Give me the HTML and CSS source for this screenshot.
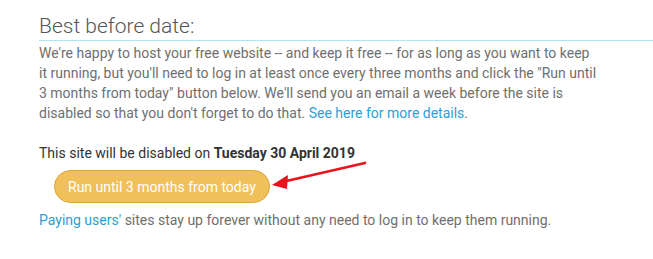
FILE: index.html
```html
<!DOCTYPE html>
<html>
<head>
<meta charset="utf-8">
<link rel="stylesheet" href="styles.css">
</head>
<body>
<div class="section">
  <h2 class="title">Best before date:</h2>
  <p class="intro">We're happy to host your free website -- and keep it free -- for as long as you want to keep it running, but you'll need to log in at least once every three months and click the "Run until 3 months from today" button below. We'll send you an email a week before the site is disabled so that you don't forget to do that. <a href="#">See here for more details</a>.</p>
  <p class="status">This site will be disabled on <strong>Tuesday 30 April 2019</strong></p>
  <div class="action">
    <button class="run-btn">Run until 3 months from today</button>
    <svg class="arrow" width="100" height="34" viewBox="0 0 100 34">
      <line x1="97" y1="5" x2="14" y2="24" stroke="#e8161c" stroke-width="2.8" stroke-linecap="round"/>
      <polygon points="4,27 20,17 19,31" fill="#e8161c"/>
    </svg>
  </div>
  <p class="note"><a href="#">Paying users'</a> sites stay up forever without any need to log in to keep them running.</p>
</div>
</body>
</html>
```
FILE: styles.css
```css
html, body {
  margin: 0;
  padding: 0;
  background: #fff;
}
body {
  font-family: Roboto, "Liberation Sans", sans-serif;
  color: #6f6f6f;
  font-size: 14px;
  line-height: 20px;
}
.section {
  padding: 12px 0 0 39px;
}
.title {
  margin: 0;
  font-weight: 300;
  font-size: 21px;
  line-height: 28px;
  color: #555;
  border-bottom: 1px solid #b3e5f5;
  padding-bottom: 0;
}
.intro {
  margin: 0;
  padding-top: 2px;
  max-width: 558px;
}
a {
  color: #2a9fd6;
  text-decoration: none;
}
.status {
  margin: 20px 0 0;
  color: #333;
}
.status strong {
  font-weight: 700;
}
.action {
  position: relative;
  margin: 7px 0 0 15px;
}
.run-btn {
  display: block;
  font-family: Roboto, "Liberation Sans", sans-serif;
  font-size: 14px;
  font-weight: 400;
  color: #fff;
  background: #f0c05a;
  border: 1px solid #d9a53c;
  border-radius: 17px;
  height: 33px;
  padding: 0 13px;
  cursor: pointer;
}
.arrow {
  position: absolute;
  left: 214px;
  top: -12px;
}
.note {
  margin: 7px 0 0;
}
```
